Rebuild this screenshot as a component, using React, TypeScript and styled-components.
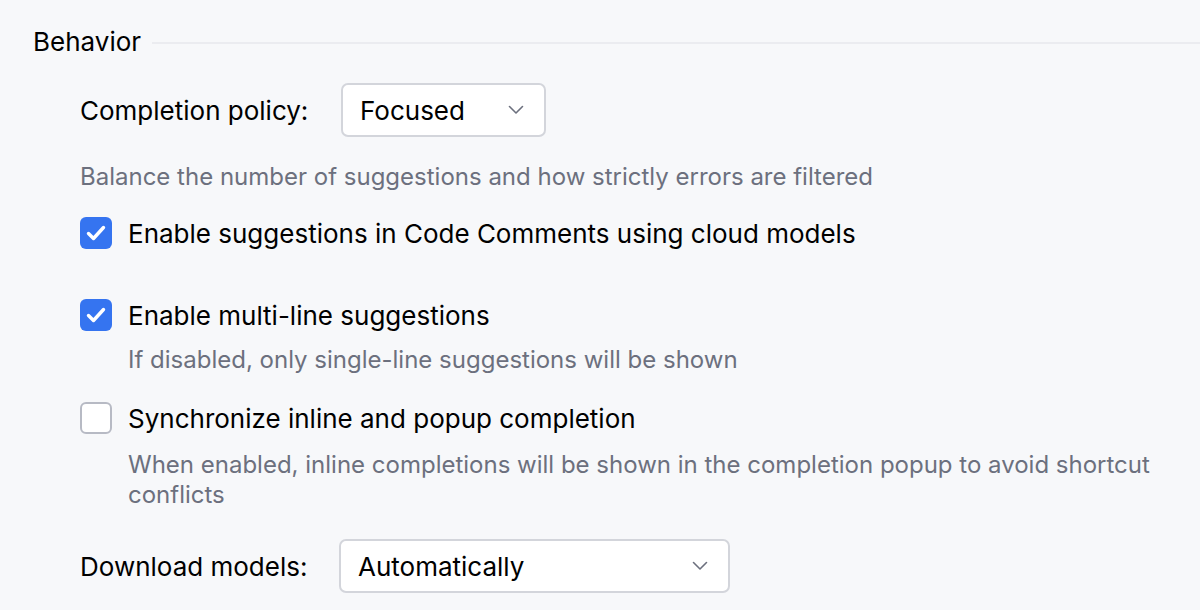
import styled, { createGlobalStyle } from 'styled-components'

const GlobalStyle = createGlobalStyle`
  html, body {
    margin: 0;
    padding: 0;
    background: #f7f8fa;
  }

  body {
    font-family: Inter, 'Noto Sans', sans-serif;
    color: #000;
    -webkit-font-smoothing: antialiased;
  }
`

const Page = styled.div`
  width: 1200px;
  height: 610px;
  overflow: hidden;
  padding: 26px 0 0 33px;
  box-sizing: border-box;
`

const GroupHeader = styled.div`
  display: flex;
  align-items: center;
  gap: 11px;
  height: 30px;
  font-size: 26px;
`

const GroupLine = styled.div`
  flex: 1;
  height: 2px;
  background: #ebecf0;
  margin-top: 4px;
`

const GroupBody = styled.div`
  display: flex;
  flex-direction: column;
  padding-left: 47px;
  padding-right: 30px;
`

const FieldRow = styled.div<{ $top: number }>`
  display: flex;
  align-items: center;
  margin-top: ${(p) => p.$top}px;
`

const FieldLabel = styled.span<{ $width: number }>`
  width: ${(p) => p.$width}px;
  font-size: 26px;
  flex-shrink: 0;
`

const Select = styled.div<{ $width: number }>`
  width: ${(p) => p.$width}px;
  height: 54px;
  box-sizing: border-box;
  display: flex;
  align-items: center;
  justify-content: space-between;
  padding: 0 20px 0 17px;
  background: #fff;
  border: 2px solid #d3d5db;
  border-radius: 7px;
  font-size: 26px;
`

const Hint = styled.div<{ $top: number; $indent?: boolean }>`
  margin-top: ${(p) => p.$top}px;
  padding-left: ${(p) => (p.$indent ? 48 : 0)}px;
  font-size: 24px;
  line-height: 30px;
  color: #6c707e;
`

const CheckRow = styled.label<{ $top: number }>`
  display: flex;
  align-items: center;
  gap: 16px;
  margin-top: ${(p) => p.$top}px;
  font-size: 26px;
  height: 32px;
`

const Box = styled.span<{ $checked: boolean }>`
  width: 32px;
  height: 32px;
  box-sizing: border-box;
  border-radius: 6px;
  flex-shrink: 0;
  display: flex;
  align-items: center;
  justify-content: center;
  background: ${(p) => (p.$checked ? '#3574f0' : '#fff')};
  border: ${(p) => (p.$checked ? 'none' : '2px solid #b7bac4')};
`

const Chevron = () => (
  <svg width="16" height="10" viewBox="0 0 16 10" fill="none">
    <path d="M1.5 1.5 8 8l6.5-6.5" stroke="#6c707e" strokeWidth="1.6" strokeLinecap="round" strokeLinejoin="round" />
  </svg>
)

const Tick = () => (
  <svg width="20" height="16" viewBox="0 0 20 16" fill="none">
    <path d="M2.5 8.5 7.5 13.5 17.5 2.5" stroke="#fff" strokeWidth="3.4" strokeLinecap="round" strokeLinejoin="round" />
  </svg>
)

const Checkbox: React.FC<{ checked: boolean; label: string; top: number }> = ({ checked, label, top }) => (
  <CheckRow $top={top}>
    <Box $checked={checked}>{checked && <Tick />}</Box>
    <span>{label}</span>
  </CheckRow>
)

const App = () => {
  return (
    <>
      <GlobalStyle />
      <Page>
        <GroupHeader>
          <span>Behavior</span>
          <GroupLine />
        </GroupHeader>
        <GroupBody>
          <FieldRow $top={27}>
            <FieldLabel $width={261}>Completion policy:</FieldLabel>
            <Select $width={205}>
              <span>Focused</span>
              <Chevron />
            </Select>
          </FieldRow>
          <Hint $top={25}>Balance the number of suggestions and how strictly errors are filtered</Hint>
          <Checkbox checked top={25} label='Enable suggestions in Code Comments using cloud models' />
          <Checkbox checked top={50} label='Enable multi-line suggestions' />
          <Hint $top={14} $indent>
            If disabled, only single-line suggestions will be shown
          </Hint>
          <Checkbox checked={false} top={27} label='Synchronize inline and popup completion' />
          <Hint $top={16} $indent>
            When enabled, inline completions will be shown in the completion popup to avoid shortcut conflicts
          </Hint>
          <FieldRow $top={29}>
            <FieldLabel $width={259}>Download models:</FieldLabel>
            <Select $width={391}>
              <span>Automatically</span>
              <Chevron />
            </Select>
          </FieldRow>
        </GroupBody>
      </Page>
    </>
  )
}

export default App
